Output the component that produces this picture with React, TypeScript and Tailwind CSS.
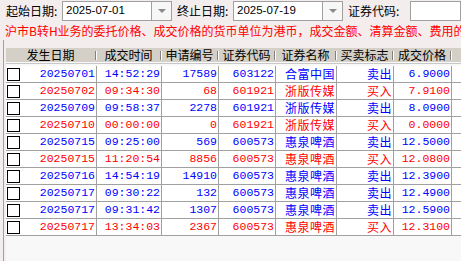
const cjk = "font-['Noto_Sans_CJK_SC',sans-serif]";
const mono = "font-['Liberation_Mono','Noto_Sans_CJK_SC',monospace]";

type Trade = {
  date: string;
  time: string;
  no: string;
  code: string;
  name: string;
  side: string;
  price: string;
  buy: boolean;
};

const trades: Trade[] = [
  { date: "20250701", time: "14:52:29", no: "17589", code: "603122", name: "合富中国", side: "卖出", price: "6.9000", buy: false },
  { date: "20250702", time: "09:34:30", no: "68", code: "601921", name: "浙版传媒", side: "买入", price: "7.9100", buy: true },
  { date: "20250709", time: "09:58:37", no: "2278", code: "601921", name: "浙版传媒", side: "卖出", price: "8.0900", buy: false },
  { date: "20250710", time: "00:00:00", no: "0", code: "601921", name: "浙版传媒", side: "买入", price: "0.0000", buy: true },
  { date: "20250715", time: "09:25:00", no: "569", code: "600573", name: "惠泉啤酒", side: "卖出", price: "12.5000", buy: false },
  { date: "20250715", time: "11:20:54", no: "8856", code: "600573", name: "惠泉啤酒", side: "买入", price: "12.0800", buy: true },
  { date: "20250716", time: "14:54:19", no: "14910", code: "600573", name: "惠泉啤酒", side: "卖出", price: "12.3900", buy: false },
  { date: "20250717", time: "09:30:22", no: "132", code: "600573", name: "惠泉啤酒", side: "卖出", price: "12.4900", buy: false },
  { date: "20250717", time: "09:31:42", no: "1307", code: "600573", name: "惠泉啤酒", side: "卖出", price: "12.5900", buy: false },
  { date: "20250717", time: "13:34:03", no: "2367", code: "600573", name: "惠泉啤酒", side: "买入", price: "12.3100", buy: true },
];

const headers = [
  { label: "发生日期", w: "w-[89px]" },
  { label: "成交时间", w: "w-[63px]" },
  { label: "申请编号", w: "w-[55px]" },
  { label: "证券代码", w: "w-[55px]" },
  { label: "证券名称", w: "w-[59px]" },
  { label: "买卖标志", w: "w-[55px]" },
  { label: "成交价格", w: "w-[56px]" },
];

const DateBox = ({ value }: { value: string }) => (
  <div className="flex h-[20px] w-[110px] shrink-0 border border-[#a0a0a0] bg-white">
    <div className="flex flex-1 items-center pl-[3px] font-['Liberation_Sans',sans-serif] text-[11.5px] text-black">
      {value}
    </div>
    <div className="flex w-[20px] items-center justify-center border-l border-[#a0a0a0] bg-[#f7f7f7]">
      <svg width="8" height="5" viewBox="0 0 8 5">
        <path d="M0 0 L8 0 L4 4 Z" fill="#8a8a8a" />
      </svg>
    </div>
  </div>
);

const Cell = ({ w, className, children }: { w: string; className?: string; children?: React.ReactNode }) => (
  <div className={`flex h-full shrink-0 items-center overflow-hidden whitespace-nowrap border-r border-[#a0a0a0] pr-[1px] leading-[16px] ${w} ${className || "justify-end"}`}>
    {children}
  </div>
);

export default function App() {
  return (
    <div className="flex h-[261px] w-[461px] flex-col overflow-hidden bg-[#f3eded] text-black">
      {/* query bar */}
      <div className={`flex h-[22px] shrink-0 items-start pt-[1px] text-[12px] ${cjk}`}>
        <span className="ml-[6px] w-[56px] shrink-0 leading-[20px]">起始日期:</span>
        <DateBox value="2025-07-01" />
        <span className="ml-[5px] w-[56px] shrink-0 leading-[20px]">终止日期:</span>
        <DateBox value="2025-07-19" />
        <span className="ml-[5px] w-[62px] shrink-0 leading-[20px]">证券代码:</span>
        <div className="h-[20px] flex-1 border border-[#a0a0a0] bg-white" />
      </div>

      <div className={`h-[18px] shrink-0 overflow-hidden whitespace-nowrap pl-[5px] text-[12px] leading-[18px] text-[#ff0000] ${cjk}`}>
        沪市B转H业务的委托价格、成交价格的货币单位为港币，成交金额、清算金额、费用的货币单位为人民币
      </div>

      <div className="ml-[3px] flex flex-1 flex-col border-l border-[#a0a0a0] pl-[2px] pt-[8px]">
        <div className="flex flex-1 flex-col bg-[#f8f8f8]">
          {/* header */}
          <div className={`flex h-[14px] shrink-0 items-center whitespace-nowrap bg-[#d4d0c8] text-[12px] ${cjk}`}>
            {headers.map((h) => (
              <div key={h.label} className="flex h-full shrink-0 items-center">
                <div className={`${h.w} shrink-0 text-center leading-[14px]`}>{h.label}</div>
                <div className="h-[9px] w-[2px] shrink-0 border-l border-r border-l-[#808080] border-r-white" />
              </div>
            ))}
            <div className="w-[70px] shrink-0 text-center leading-[14px]">成交数量</div>
          </div>
          <div className="mt-[1px] h-[1px] shrink-0 bg-[#c8c8c8]" />
          <div className="h-[2px] shrink-0" />

          {/* rows */}
          {trades.map((t, i) => (
            <div
              key={i}
              className={`flex h-[17px] shrink-0 border-b border-[#a0a0a0] bg-white ${t.buy ? "text-[#ff0000]" : "text-[#0000ff]"}`}
            >
              <Cell w="w-[91px]" className={`justify-between pl-[1px] text-[11.5px] ${mono}`}>
                <span className="block h-[13px] w-[13px] shrink-0 border border-black bg-white" />
                <span>{t.date}</span>
              </Cell>
              <Cell w="w-[65px]" className={`justify-end text-[11.5px] ${mono}`}>{t.time}</Cell>
              <Cell w="w-[57px]" className={`justify-end text-[11.5px] ${mono}`}>{t.no}</Cell>
              <Cell w="w-[57px]" className={`justify-end text-[11.5px] ${mono}`}>{t.code}</Cell>
              <Cell w="w-[61px]" className={`justify-end text-[12px] tracking-[0.5px] ${cjk}`}>{t.name}</Cell>
              <Cell w="w-[57px]" className={`justify-end text-[12px] tracking-[0.5px] ${cjk}`}>{t.side}</Cell>
              <Cell w="w-[58px]" className={`justify-end text-[11.5px] ${mono}`}>{t.price}</Cell>
              <div className="flex-1" />
            </div>
          ))}
        </div>
      </div>
    </div>
  );
}
